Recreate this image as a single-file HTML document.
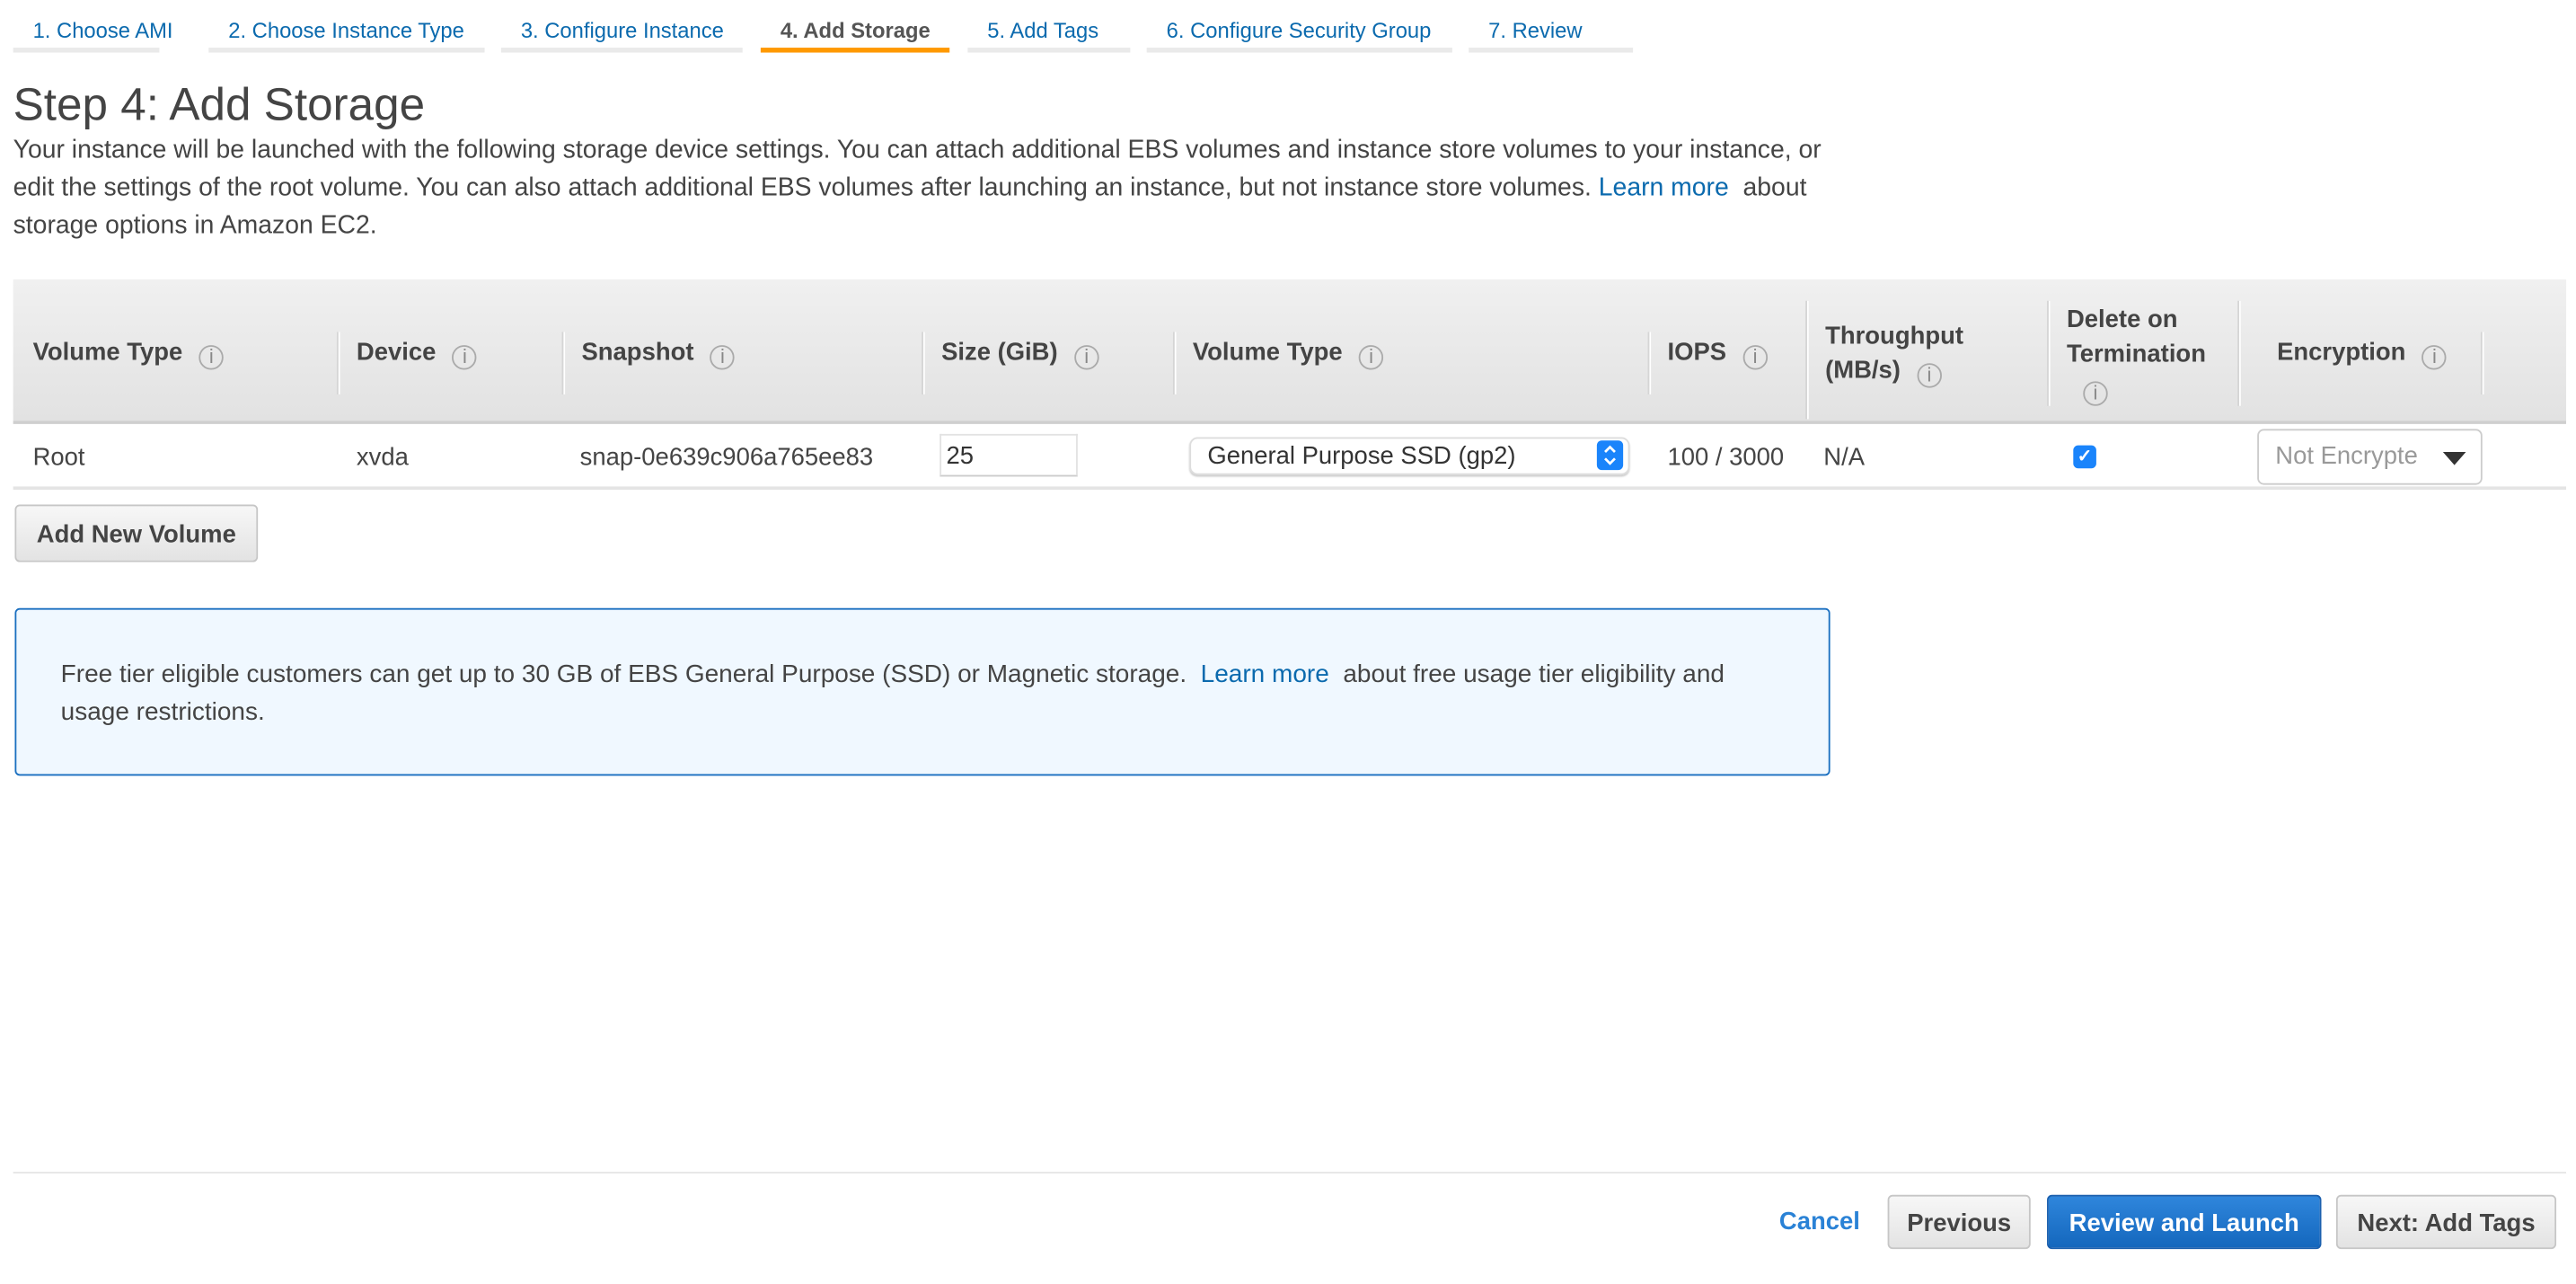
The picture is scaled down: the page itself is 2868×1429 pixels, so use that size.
<!DOCTYPE html>
<html><head><meta charset="utf-8"><style>
html,body{margin:0;padding:0;background:#fff;width:2868px;height:1428px;overflow:hidden}
#w{position:absolute;left:0;top:0;width:1568px;height:781px;transform:scale(1.82908);transform-origin:0 0;font-family:"Liberation Sans",Arial,sans-serif;color:#444}
.a{position:absolute;white-space:nowrap}
.tab{position:absolute;top:0;height:32px;border-bottom:3px solid #eaeaea;font-size:13px;color:#0b6aae;line-height:37px;box-sizing:border-box;white-space:nowrap}
.tab span{position:absolute;top:0;left:12px;white-space:nowrap}
.sel{border-bottom-color:#f90;color:#555;font-weight:bold}
.h{position:absolute;font-size:15px;font-weight:bold;color:#444;white-space:nowrap}
.i{display:inline-block;width:15px;height:15px;border:1.5px solid #aaa;border-radius:50%;box-sizing:border-box;font:normal 12px/13px "Liberation Sans",sans-serif;color:#888;text-align:center;vertical-align:-2px;margin-left:10px}
.sep{position:absolute;width:1px;background:#d5d5d5;border-right:1px solid #fff}
.c{position:absolute;top:270px;font-size:15px;color:#444;white-space:nowrap}
.btn{position:absolute;height:33px;border:1px solid #c6c6c6;border-radius:3px;background:linear-gradient(#f7f7f7,#e3e3e3);font-size:15px;font-weight:bold;color:#444;text-align:center;line-height:33px;box-sizing:border-box;white-space:nowrap}
</style></head><body><div id="w">
<div class="tab" style="left:8px;width:89px"><span>1. Choose AMI</span></div>
<div class="tab" style="left:127px;width:168px"><span>2. Choose Instance Type</span></div>
<div class="tab" style="left:305px;width:147px"><span>3. Configure Instance</span></div>
<div class="tab sel" style="left:463px;width:115px"><span>4. Add Storage</span></div>
<div class="tab" style="left:589px;width:99px"><span>5. Add Tags</span></div>
<div class="tab" style="left:698px;width:186px"><span>6. Configure Security Group</span></div>
<div class="tab" style="left:894px;width:100px"><span>7. Review</span></div>

<div class="a" style="left:8px;top:48px;font-size:28px;color:#444">Step 4: Add Storage</div>
<div class="a" style="left:8px;top:80px;width:1110px;white-space:normal;font-size:15.5px;line-height:23px;color:#444">Your instance will be launched with the following storage device settings. You can attach additional EBS volumes and instance store volumes to your instance, or edit the settings of the root volume. You can also attach additional EBS volumes after launching an instance, but not instance store volumes. <span style="color:#0b6aae">Learn more</span>&nbsp; about storage options in Amazon EC2.</div>

<div class="a" style="left:8px;top:170px;width:1554px;height:86px;background:linear-gradient(#f0f0f0,#e2e2e2);border-bottom:2px solid #cfcfcf"></div>
<div class="h" style="left:20px;top:206px">Volume Type<span class="i">i</span></div>
<div class="h" style="left:217px;top:206px">Device<span class="i">i</span></div>
<div class="h" style="left:354px;top:206px">Snapshot<span class="i">i</span></div>
<div class="h" style="left:573px;top:206px">Size (GiB)<span class="i">i</span></div>
<div class="h" style="left:726px;top:206px">Volume Type<span class="i">i</span></div>
<div class="h" style="left:1015px;top:206px">IOPS<span class="i">i</span></div>
<div class="h" style="left:1111px;top:194px;line-height:21px">Throughput<br>(MB/s)<span class="i">i</span></div>
<div class="h" style="left:1258px;top:184px;line-height:21px">Delete on<br>Termination<br><span class="i" style="margin-left:10px">i</span></div>
<div class="h" style="left:1386px;top:206px">Encryption<span class="i">i</span></div>
<div class="sep" style="left:205px;top:202px;height:38px"></div>
<div class="sep" style="left:342px;top:202px;height:38px"></div>
<div class="sep" style="left:561px;top:202px;height:38px"></div>
<div class="sep" style="left:714px;top:202px;height:38px"></div>
<div class="sep" style="left:1003px;top:202px;height:38px"></div>
<div class="sep" style="left:1099px;top:183px;height:72px"></div>
<div class="sep" style="left:1246px;top:183px;height:64px"></div>
<div class="sep" style="left:1362px;top:183px;height:64px"></div>
<div class="sep" style="left:1510px;top:202px;height:38px"></div>

<div class="c" style="left:20px">Root</div>
<div class="c" style="left:217px">xvda</div>
<div class="c" style="left:353px">snap-0e639c906a765ee83</div>
<div class="a" style="left:572px;top:264px;width:84px;height:26px;border:1px solid #e2e2e2;border-bottom-color:#ccc;box-sizing:border-box;font-size:15px;line-height:26px;padding-left:3px;color:#333">25</div>
<div class="a" style="left:724px;top:266px;width:268px;height:23px;border:1px solid #ddd;border-radius:5px;box-shadow:0 1px 1px #ccc;box-sizing:border-box;font-size:15px;line-height:21px;padding-left:10px;color:#333">General Purpose SSD (gp2)<span style="position:absolute;right:3px;top:1px;width:16px;height:18px;background:#1a84fb;border-radius:3px"><svg width="16" height="18" viewBox="0 0 16 18"><path d="M5 7 L8 4 L11 7 M5 11 L8 14 L11 11" fill="none" stroke="#fff" stroke-width="1.5"/></svg></span></div>
<div class="c" style="left:1015px">100 / 3000</div>
<div class="c" style="left:1110px">N/A</div>
<div class="a" style="left:1262px;top:271px;width:14px;height:14px;border-radius:3px;background:#1a84fb;color:#fff;font-size:11px;line-height:14px;text-align:center;font-weight:bold">✓</div>
<div class="a" style="left:1374px;top:261px;width:137px;height:34px;border:1px solid #ccc;border-radius:4px;box-sizing:border-box;font-size:15px;line-height:32px;padding-left:10px;color:#999">Not Encrypte<span style="position:absolute;right:9px;top:13px;border-left:7px solid transparent;border-right:7px solid transparent;border-top:8px solid #333"></span></div>
<div class="a" style="left:8px;top:296px;width:1554px;height:2px;background:#e4e4e4"></div>

<div class="btn" style="left:9px;top:307px;width:148px;height:35px;line-height:35px">Add New Volume</div>

<div class="a" style="left:9px;top:370px;width:1105px;height:102px;border:1px solid #1a6fc0;border-radius:3px;background:#f0f8ff;box-sizing:border-box;white-space:normal;font-size:15.3px;line-height:23px;color:#444;padding:28px 60px 0 27px">Free tier eligible customers can get up to 30 GB of EBS General Purpose (SSD) or Magnetic storage. &nbsp;<span style="color:#0b6aae">Learn more</span>&nbsp; about free usage tier eligibility and usage restrictions.</div>

<div class="a" style="left:8px;top:713px;width:1554px;height:1px;background:#e6e6e6"></div>
<div class="a" style="left:1083px;top:735px;font-size:15px;font-weight:bold;color:#2a82d6">Cancel</div>
<div class="btn" style="left:1149px;top:727px;width:87px">Previous</div>
<div class="btn" style="left:1246px;top:727px;width:167px;background:linear-gradient(#2f86dc,#1467bd);border-color:#1a5fae;color:#fff">Review and Launch</div>
<div class="btn" style="left:1422px;top:727px;width:134px">Next: Add Tags</div>
</div></body></html>
